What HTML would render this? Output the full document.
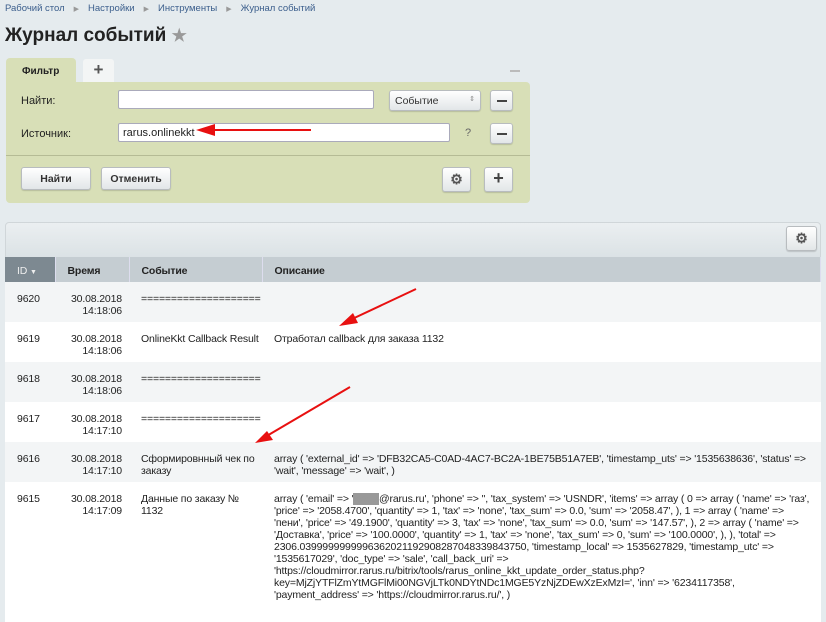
<!DOCTYPE html>
<html><head><meta charset="utf-8"><style>
*{box-sizing:border-box;margin:0;padding:0}
body{width:826px;height:600px;overflow:hidden;background:#e5ebee;font-family:"Liberation Sans",sans-serif;color:#222;position:relative}
.a{position:absolute}
.bc{top:3px;left:5px;font-size:9.5px;color:#3b5e8c}
.bc span{color:#999;margin:0 9px;font-size:7px}
h1{position:absolute;left:5px;top:25px;font-size:19px;font-weight:bold;color:#222}
.olive{background:#d8dfb7}
.inp{background:#fff;border:1px solid #aab;border-radius:2px;height:20px}
.btn{background:linear-gradient(#fff,#e2e6e8);border:1px solid #b8bcbf;border-radius:3px;font-size:10.5px;font-weight:bold;text-align:center;color:#333;box-shadow:0 1px 1px rgba(0,0,0,.15)}
table{border-collapse:collapse;font-size:10.5px;position:absolute;left:5px;top:257px;width:816px;letter-spacing:-0.15px}
td,th{vertical-align:top;text-align:left;padding:0}
th{height:25px;background:#c5cdd2;font-weight:bold;padding:8px 0 0 12px;font-size:10.5px;border-right:1px solid #dde;}
td{padding:11px 0 0 12px;line-height:12px}
tr.g td{background:#f3f5f6}
tr.w td{background:#fff}
</style></head><body>
<div class="a bc">Рабочий стол<span>▶</span>Настройки<span>▶</span>Инструменты<span>▶</span>Журнал событий</div>
<h1>Журнал событий <span style="color:#999;font-size:17px">★</span></h1>
<div class="a olive" style="left:6px;top:58px;width:70px;height:27px;border-radius:4px 4px 0 0;font-size:10px;font-weight:bold;padding:8px 0 0 16px">Фильтр</div>
<div class="a" style="left:83px;top:59px;width:31px;height:23px;background:#f3f5f5;border-radius:3px 3px 0 0;font-size:17px;font-weight:bold;color:#555;text-align:center;line-height:22px">+</div>
<div class="a" style="left:510px;top:70px;width:10px;height:2px;background:#bbb"></div>
<div class="a olive" style="left:6px;top:82px;width:524px;height:121px;border-radius:0 4px 4px 4px"></div>
<div class="a" style="left:21px;top:95px;font-size:11px">Найти:</div>
<div class="a inp" style="left:118px;top:90px;width:256px;height:19px"></div>
<div class="a btn" style="left:389px;top:90px;width:92px;height:21px;font-weight:normal;text-align:left;padding:4px 5px;font-size:10.5px">Событие<span style="float:right;font-size:7px;color:#888">⇕</span></div>
<div class="a btn" style="left:490px;top:90px;width:23px;height:21px"><div style="width:10px;height:2px;background:#444;margin:9px auto"></div></div>
<div class="a" style="left:21px;top:128px;font-size:11px">Источник:</div>
<div class="a inp" style="left:118px;top:123px;width:332px;height:19px;font-size:11px;padding:3px 4px">rarus.onlinekkt</div>
<div class="a" style="left:465px;top:127px;font-size:11px;color:#666">?</div>
<div class="a btn" style="left:490px;top:123px;width:23px;height:21px"><div style="width:10px;height:2px;background:#444;margin:9px auto"></div></div>
<div class="a" style="left:6px;top:155px;width:524px;height:1px;background:#b5bb95"></div>
<div class="a btn" style="left:21px;top:167px;width:70px;height:23px;padding-top:5px">Найти</div>
<div class="a btn" style="left:101px;top:167px;width:70px;height:23px;padding-top:5px">Отменить</div>
<div class="a btn" style="left:442px;top:167px;width:29px;height:25px;font-size:14px;padding-top:3px;color:#555">⚙</div>
<div class="a btn" style="left:484px;top:167px;width:29px;height:25px;font-size:18px;padding-top:0;color:#444">+</div>
<div class="a" style="left:5px;top:222px;width:816px;height:36px;background:linear-gradient(#ebeff1,#dbe2e5);border-radius:4px 4px 0 0;border:1px solid #d0d6d9"></div>
<div class="a btn" style="left:786px;top:226px;width:31px;height:25px;font-size:14px;padding-top:3px;color:#555">⚙</div>
<table>
<tr><th style="width:50px;background:#7d8991;color:#eee;font-weight:normal">ID <span style="font-size:7px">▼</span></th><th style="width:74px">Время</th><th style="width:133px">Событие</th><th>Описание</th></tr>
<tr class="g" style="height:40px"><td>9620</td><td style="text-align:right;padding-right:7px">30.08.2018<br>14:18:06</td><td>====================</td><td></td></tr>
<tr class="w" style="height:40px"><td>9619</td><td style="text-align:right;padding-right:7px">30.08.2018<br>14:18:06</td><td>OnlineKkt Callback Result</td><td>Отработал callback для заказа 1132</td></tr>
<tr class="g" style="height:40px"><td>9618</td><td style="text-align:right;padding-right:7px">30.08.2018<br>14:18:06</td><td>====================</td><td></td></tr>
<tr class="w" style="height:40px"><td>9617</td><td style="text-align:right;padding-right:7px">30.08.2018<br>14:17:10</td><td>====================</td><td></td></tr>
<tr class="g" style="height:40px"><td>9616</td><td style="text-align:right;padding-right:7px">30.08.2018<br>14:17:10</td><td>Сформировнный чек по заказу</td><td style="padding-right:4px">array ( 'external_id' =&gt; 'DFB32CA5-C0AD-4AC7-BC2A-1BE75B51A7EB', 'timestamp_uts' =&gt; '1535638636', 'status' =&gt; 'wait', 'message' =&gt; 'wait', )</td></tr>
<tr class="w" style="height:140px"><td>9615</td><td style="text-align:right;padding-right:7px">30.08.2018<br>14:17:09</td><td>Данные по заказу №<br>1132</td><td style="padding-right:8px">array ( 'email' =&gt; '<span style="background:#999;color:#999">xxxxx</span>@rarus.ru', 'phone' =&gt; '', 'tax_system' =&gt; 'USNDR', 'items' =&gt; array ( 0 =&gt; array ( 'name' =&gt; 'газ', 'price' =&gt; '2058.4700', 'quantity' =&gt; 1, 'tax' =&gt; 'none', 'tax_sum' =&gt; 0.0, 'sum' =&gt; '2058.47', ), 1 =&gt; array ( 'name' =&gt; 'пени', 'price' =&gt; '49.1900', 'quantity' =&gt; 3, 'tax' =&gt; 'none', 'tax_sum' =&gt; 0.0, 'sum' =&gt; '147.57', ), 2 =&gt; array ( 'name' =&gt; 'Доставка', 'price' =&gt; '100.0000', 'quantity' =&gt; 1, 'tax' =&gt; 'none', 'tax_sum' =&gt; 0, 'sum' =&gt; '100.0000', ), ), 'total' =&gt; 2306.0399999999996362021192908287048339843750, 'timestamp_local' =&gt; 1535627829, 'timestamp_utc' =&gt; '1535617029', 'doc_type' =&gt; 'sale', 'call_back_uri' =&gt; 'https://cloudmirror.rarus.ru/bitrix/tools/rarus_online_kkt_update_order_status.php?key=MjZjYTFlZmYtMGFlMi00NGVjLTk0NDYtNDc1MGE5YzNjZDEwXzExMzI=', 'inn' =&gt; '6234117358', 'payment_address' =&gt; 'https://cloudmirror.rarus.ru/', )</td></tr>
</table>
<svg class="a" style="left:0;top:0" width="826" height="600">
<g stroke="#e81010" stroke-width="2" fill="#e81010">
<line x1="311" y1="130" x2="210" y2="130"/><polygon points="196,130 215,124 215,136" stroke="none"/>
<line x1="416" y1="289" x2="350" y2="320"/><polygon points="339,326 353,313 358,323" stroke="none"/>
<line x1="350" y1="387" x2="265" y2="437"/><polygon points="255,443 267,431 273,440" stroke="none"/>
</g></svg>
</body></html>
